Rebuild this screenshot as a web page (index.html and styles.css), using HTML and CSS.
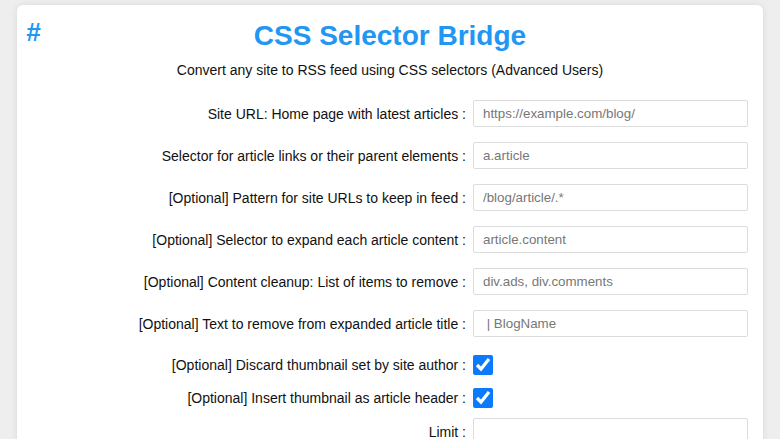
FILE: index.html
```html
<!DOCTYPE html>
<html lang="en">
<head>
<meta charset="utf-8">
<title>CSS Selector Bridge</title>
<link rel="stylesheet" href="styles.css">
</head>
<body>
<section class="bridge-card" id="bridge-css-selector">
  <a class="anchor" href="#bridge-css-selector">#</a>
  <h2 class="bridge-title">CSS Selector Bridge</h2>
  <p class="bridge-desc">Convert any site to RSS feed using CSS selectors (Advanced Users)</p>
  <form class="params">
    <div class="row">
      <label for="home_page">Site URL: Home page with latest articles :</label>
      <input class="field" id="home_page" type="text" placeholder="https://example.com/blog/">
    </div>
    <div class="row">
      <label for="url_selector">Selector for article links or their parent elements :</label>
      <input class="field" id="url_selector" type="text" placeholder="a.article">
    </div>
    <div class="row">
      <label for="url_pattern">[Optional] Pattern for site URLs to keep in feed :</label>
      <input class="field" id="url_pattern" type="text" placeholder="/blog/article/.*">
    </div>
    <div class="row">
      <label for="content_selector">[Optional] Selector to expand each article content :</label>
      <input class="field" id="content_selector" type="text" placeholder="article.content">
    </div>
    <div class="row">
      <label for="content_cleanup">[Optional] Content cleanup: List of items to remove :</label>
      <input class="field" id="content_cleanup" type="text" placeholder="div.ads, div.comments">
    </div>
    <div class="row">
      <label for="title_cleanup">[Optional] Text to remove from expanded article title :</label>
      <input class="field" id="title_cleanup" type="text" placeholder=" | BlogName">
    </div>
    <div class="row row-check">
      <label for="discard_thumbnail">[Optional] Discard thumbnail set by site author :</label>
      <span class="check-cell"><input class="check" id="discard_thumbnail" type="checkbox" checked></span>
    </div>
    <div class="row row-check">
      <label for="thumbnail_as_header">[Optional] Insert thumbnail as article header :</label>
      <span class="check-cell"><input class="check" id="thumbnail_as_header" type="checkbox" checked></span>
    </div>
    <div class="row">
      <label for="limit">Limit :</label>
      <input class="field" id="limit" type="number">
    </div>
  </form>
</section>
</body>
</html>
```

FILE: styles.css
```css
html, body {
  margin: 0;
  padding: 0;
}

body {
  background: #eeeeee;
  padding: 5px 17px 0;
  font-family: "Liberation Sans", Arial, Helvetica, sans-serif;
  color: #111;
  overflow: hidden;
}

.bridge-card {
  position: relative;
  background: #ffffff;
  border-radius: 6px;
  box-shadow: 0 0 7px rgba(0, 0, 0, 0.09);
  padding: 15px 15px 40px 15px;
  min-height: 480px;
}

.anchor {
  position: absolute;
  left: 9px;
  top: 12px;
  font-size: 26px;
  font-weight: bold;
  font-style: italic;
  line-height: 30px;
  color: #2196f3;
  text-decoration: none;
}

.bridge-title {
  margin: 0;
  text-align: center;
  font-size: 28px;
  line-height: 32px;
  font-weight: bold;
  color: #2196f3;
}

.bridge-desc {
  margin: 10px 0 0;
  text-align: center;
  font-size: 14px;
  line-height: 16px;
}

.params {
  margin-top: 22px;
  display: flex;
  flex-direction: column;
}

.row {
  display: flex;
  align-items: center;
  gap: 7px;
  margin-bottom: 15px;
}

.row-check {
  margin-top: 3px;
  margin-bottom: 10px;
}

.row label {
  flex: 1;
  text-align: right;
  font-size: 14px;
  line-height: 16px;
}

.field {
  box-sizing: border-box;
  width: 275px;
  height: 27px;
  margin: 0;
  padding: 0 9px;
  border: 1px solid #dcdcdc;
  border-radius: 2px;
  background: #fff;
  font-family: "Liberation Sans", Arial, Helvetica, sans-serif;
  font-size: 13.333px;
  color: #222;
}

.field::placeholder {
  color: #777;
}

.check-cell {
  width: 275px;
  height: 20px;
  display: flex;
  align-items: center;
}

.check {
  width: 20px;
  height: 20px;
  margin: 0;
  accent-color: #0b7bfd;
}
```
